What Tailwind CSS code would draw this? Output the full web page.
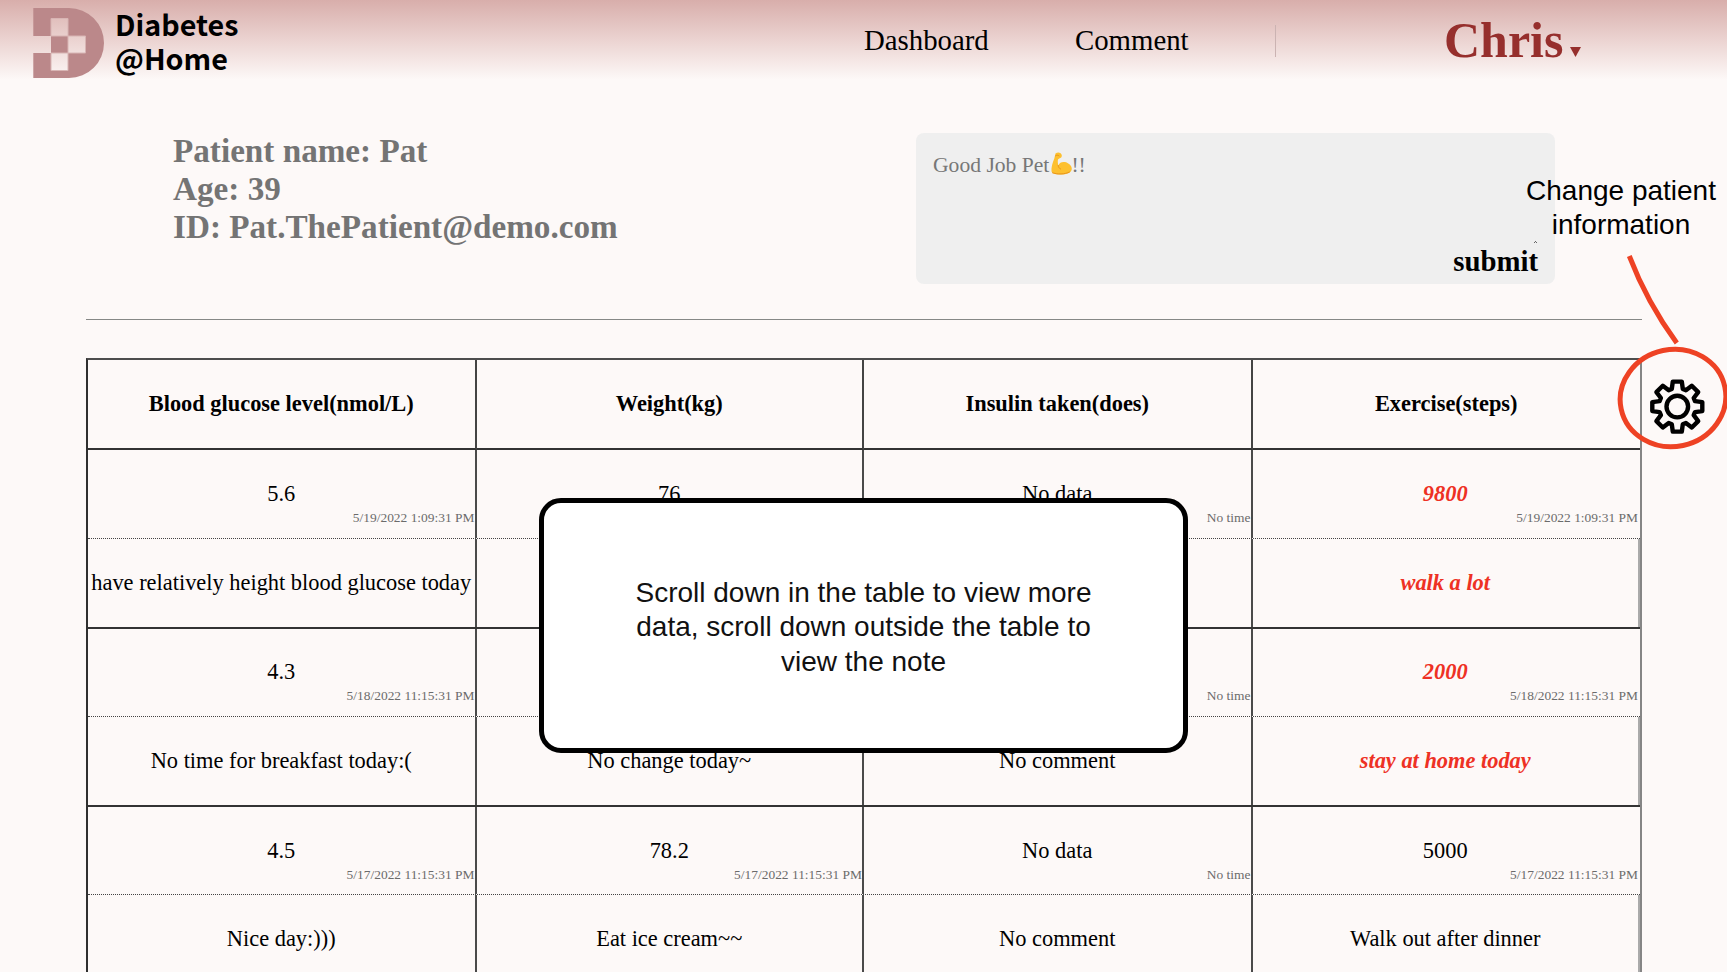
<!DOCTYPE html>
<html lang="en">
<head>
<meta charset="utf-8">
<title>Diabetes@Home</title>
<script src="https://cdn.jsdelivr.net/npm/@tailwindcss/browser@4"></script>
</head>
<body class="relative h-[972px] w-[1727px] overflow-hidden bg-[#fdf9f8] font-['Liberation_Serif',serif] text-black">

<header class="flex h-20 items-center bg-linear-to-b from-[#d8aeab] to-[#fdf9f8]">
  <svg class="ml-[33px] h-[70px] w-[71px] shrink-0 mt-1.5" viewBox="0 0 71 70">
    <path fill="#bb888a" fill-rule="evenodd" d="M.3 0H36a35 35 0 0 1 0 70H.3V45H18V28H.3ZM18 10.500V28H35V10.500ZM35 28V45H52.500V28ZM18 45V62.500H35V45Z"/>
    <path fill="none" stroke="#d8b5b4" d="M18 10.500H35V28H18ZM35 28H52.500V45H35ZM18 45H35V62.500H18Z"/>
  </svg>
  <div class="ml-[11px] w-[181px] font-['Noto_Sans_CJK_SC',sans-serif] text-[28.700px] font-bold mt-0.5">
    <p class="leading-[34.500px]">Diabetes</p>
    <p class="leading-[34.500px]">@Home</p>
  </div>
  <nav class="ml-[568px] mt-px flex items-center text-[28.800px] leading-none">
    <a class="w-[211px]">Dashboard</a>
    <a class="w-[200px]">Comment</a>
    <span class="h-8 w-px bg-[#cbb3b2]"></span>
  </nav>
  <div class="ml-[168px] flex items-center text-[#962f2d]">
    <span class="text-[50px] leading-none font-bold">Chris</span>
    <svg class="ml-[7px] mt-6 h-[10px] w-[11px]" viewBox="0 0 11 10"><path fill="currentColor" d="M0 0H11L5.500 10Z"/></svg>
  </div>
</header>

<main class="ml-[86px] w-[1556px]">
  <section class="flex h-[239px] justify-between pt-[52px] pr-[87px] pl-[87px]">
    <div class="text-[33.200px] leading-[38px] font-bold text-[#747474]">
      <p>Patient name: Pat</p>
      <p>Age: 39</p>
      <p>ID: Pat.ThePatient@demo.com</p>
    </div>
    <div class="mt-px flex h-[151px] w-[639px] flex-col justify-between rounded-lg bg-[#efefef] pt-[21px] pr-[17px] pb-2 pl-[17px]">
      <div class="flex text-[21.600px] leading-[22px] text-[#777]">
        <span>Good Job Pet</span>
        <svg class="mt-[-2px] ml-[2px] h-[23px] w-[21px]" viewBox="0 0 21 23">
          <path fill="#fdc02f" d="M4.500 1.500C6 .3 8 0 9.600 1.200 11 2.300 11.200 4.300 10.200 5.500 9 6.600 7.500 6.400 7 7.500 6.500 9 7 11 7.200 13.500 8.500 10.500 11 9.500 13.800 10 17.500 10.700 21 13.700 20.800 17 20.500 20.800 15.500 22.500 10 22.500 5.500 22.500 1.500 22 .5 19.500 0 15 1.800 10.500 3.300 6.500Z"/>
          <path fill="none" stroke="#e8951c" stroke-width="1" stroke-linecap="round" d="M4.500 3.800C5.500 2.800 7 3 8 3.800M7.200 13.500C7.300 15 8.200 16.500 9.500 17M1.500 20.800C6 22.500 14 22.500 18.500 20"/>
        </svg>
        <span class="ml-[-1px]">!!</span>
      </div>
      <div class="flex flex-col items-end">
        <svg class="mr-px mb-1 h-[2px] w-[3px]" viewBox="0 0 3 2"><path fill="#666" d="M1 0H2V1H1ZM0 1H1V2H0ZM2 1H3V2H2Z"/></svg>
        <button class="text-[28.800px] leading-none font-bold">submit</button>
      </div>
    </div>
  </section>

  <div class="h-px w-full bg-[#868886]"></div>

  <div class="mt-[38px] h-[640px] border-2 border-t-[#4d4d4d] border-r-[#858585] border-l-[#303030] border-b-[#444] text-[22.400px] leading-[26px] whitespace-nowrap">
    <div class="grid h-[90px] grid-cols-[388.500px_387.500px_388.500px_387.500px] font-bold *:flex *:items-center *:justify-center *:border-r-2 *:border-b-2 *:border-r-[#444] *:border-b-[#333]">
      <div>Blood glucose level(nmol/L)</div><div>Weight(kg)</div><div>Insulin taken(does)</div><div class="border-r-0!">Exercise(steps)</div>
    </div>
    <div id="rows"></div>
  </div>
</main>

<aside class="absolute top-[498px] left-[539px] flex h-[255px] w-[649px] items-center justify-center rounded-[22px] border-5 border-black bg-white text-center font-['Liberation_Sans',sans-serif] text-[28px] leading-[34.200px] text-[#111]">
  <p class="pt-1">Scroll down in the table to view more<br>data, scroll down outside the table to<br>view the note</p>
</aside>

<p class="absolute top-[174px] left-[1521px] w-[200px] text-center font-['Liberation_Sans',sans-serif] text-[28px] leading-[34.200px] whitespace-nowrap">Change patient<br>information</p>

<svg class="absolute top-[250px] left-[1607px] h-[210px] w-[120px]" viewBox="1607 250 120 210" fill="none">
  <g stroke="#ee4224" stroke-width="5">
    <path d="M1629.300 256C1640 284 1657 316 1676.800 343"/>
    <ellipse cx="1673" cy="398" rx="53" ry="48.500" transform="rotate(-12 1673 398)"/>
  </g>
  <g stroke="#000" stroke-width="4.400" stroke-linejoin="round" transform="translate(1677.300 406.600)">
    <circle r="10.800"/>
    <path d="M-5.500-17.700-4.500-25 4.500-25 5.500-17.700 8.600-16.400 14.500-20.900 20.900-14.500 16.400-8.600 17.700-5.500 25-4.500 25 4.500 17.700 5.500 16.400 8.600 20.900 14.500 14.500 20.900 8.600 16.400 5.500 17.700 4.500 25-4.500 25-5.500 17.700-8.600 16.400-14.500 20.900-20.900 14.500-16.400 8.600-17.700 5.500-25 4.500-25-4.500-17.700-5.500-16.400-8.600-20.900-14.500-14.500-20.900-8.600-16.400Z"/>
  </g>
</svg>

<script>
const days = [
  { h: 'h-[89px]', vp: '', np: 'pb-px', v: [['5.6','5/19/2022 1:09:31 PM'],['76',''],['No data','No time'],['9800','5/19/2022 1:09:31 PM']],
    n: ['have relatively height blood glucose today','','','walk a lot'], alert: true },
  { h: 'h-[88px]', vp: 'pb-0.5', np: '', v: [['4.3','5/18/2022 11:15:31 PM'],['',''],['','No time'],['2000','5/18/2022 11:15:31 PM']],
    n: ['No time for breakfast today:(','No change today~','No comment','stay at home today'], alert: true },
  { h: 'h-[88px]', vp: '', np: '', v: [['4.5','5/17/2022 11:15:31 PM'],['78.2','5/17/2022 11:15:31 PM'],['No data','No time'],['5000','5/17/2022 11:15:31 PM']],
    n: ['Nice day:)))','Eat ice cream~~','No comment','Walk out after dinner'] },
];
const red = 'font-bold italic text-[#ee3124]';
const cols = 'grid grid-cols-[388.500px_387.500px_388.500px_387.500px]';
document.getElementById('rows').innerHTML = days.map((d, r) => `
  <div class="${cols} ${d.h} border-b border-dotted border-[#444]">${d.v.map(([v, t], i) => `
    <div class="grid ${i < 3 ? 'border-r-2 border-solid border-r-[#4a4a4a]' : 'pr-0.5'}">
      <span class="col-start-1 row-start-1 place-self-center ${d.vp} ${i === 3 && d.alert ? red : ''}">${v}</span>
      <span class="col-start-1 row-start-1 self-end justify-self-end ${r === 2 ? 'pb-[11px]' : 'pb-3'} text-[13.440px] leading-4 text-[#6b6b6b]">${t}</span>
    </div>`).join('')}</div>
  <div class="${cols} h-[90px] border-b-2 border-[#333]">${d.n.map((n, i) => `
    <div class="flex items-center justify-center border-r-2 ${d.np} ${i < 3 ? 'border-[#4a4a4a]' : 'border-[#aaa]'} ${i === 3 && d.alert ? red : ''}">${n}</div>`).join('')}</div>`).join('');
</script>
</body>
</html>
